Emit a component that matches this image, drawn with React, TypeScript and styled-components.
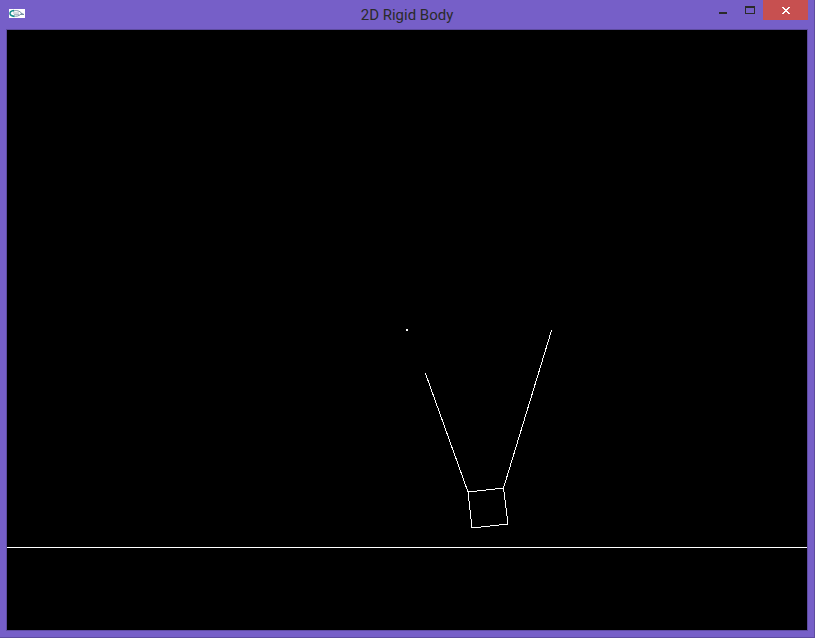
import React from "react";
import styled, { createGlobalStyle } from "styled-components";

const frame = "#765fc8";
const edge = "#5e4ca0";
const ink = "#2a2a2a";

const GlobalStyle = createGlobalStyle`
  *, *::before, *::after { box-sizing: border-box; }
  body { margin: 0; background: ${frame}; }
`;

const Window = styled.main`
  display: flex;
  flex-direction: column;
  min-height: 100vh;
  padding: 0 6px 6px;
  background: ${frame};
  border: solid ${edge};
  border-width: 0 1px 1px 0;
`;

const TitleBar = styled.header`
  display: grid;
  grid-template-columns: 1fr auto 1fr;
  align-items: start;
  height: 29px;
`;

const AppIcon = styled.svg`
  display: block;
  width: 16px;
  height: 9px;
  margin: 9px 3px;
`;

const Title = styled.h1`
  margin: 0;
  padding-top: 5px;
  color: ${ink};
  font: 400 15px/20px Roboto, "Open Sans", sans-serif;
  white-space: nowrap;
`;

const Controls = styled.div`
  display: flex;
  justify-content: flex-end;
`;

const ControlButton = styled.button<{ $close?: boolean }>`
  display: flex;
  align-items: center;
  justify-content: center;
  width: ${(p) => (p.$close ? 45 : 27)}px;
  height: 20px;
  padding: 0;
  border: 0;
  color: ${(p) => (p.$close ? "#ffffff" : ink)};
  background: ${(p) => (p.$close ? "#c75050" : "transparent")};
`;

const Glyph = styled.svg`
  display: block;
  width: 11px;
  height: 10px;
  shape-rendering: crispEdges;
`;

const Viewport = styled.section`
  display: flex;
  flex: 1;
  background: #000000;
  border: 1px solid ${edge};
`;

const Scene = styled.svg`
  display: block;
  width: 100%;
  height: auto;
  fill: none;
  stroke: #ffffff;
  shape-rendering: crispEdges;
`;

export default function App() {
  return (
    <>
      <GlobalStyle />
      <Window>
        <TitleBar>
          <AppIcon viewBox="0 0 16 9" aria-hidden="true">
            <rect width="16" height="9" fill="#ffffff" />
            <path d="M4 2.2C7 .7 11 2 12.500 4.200C11 7 7 7.800 4.500 6.800M12 4.200L15 5.500H11" fill="none" stroke="#7892a4" />
            <path d="M5 1.500C2 2 .9 3 1 4.600S3 7.100 5.500 7.400" fill="none" stroke="#128c8c" strokeWidth="1.500" />
            <path d="M4 4h6M5 5.500h5" fill="none" stroke="#94a8b5" strokeWidth=".8" />
          </AppIcon>
          <Title>2D Rigid Body</Title>
          <Controls>
            <ControlButton type="button" aria-label="Minimize">
              <Glyph viewBox="0 0 11 10" aria-hidden="true">
                <rect x="2" y="7" width="8" height="2" fill="currentColor" />
              </Glyph>
            </ControlButton>
            <ControlButton type="button" aria-label="Maximize">
              <Glyph viewBox="0 0 11 10" aria-hidden="true">
                <path d="M1 1h10v8H1zM2 3v5h8V3z" fill="currentColor" fillRule="evenodd" />
              </Glyph>
            </ControlButton>
            <ControlButton type="button" aria-label="Close" $close>
              <Glyph viewBox="0 0 11 10" aria-hidden="true">
                <path
                  d="M2 2h2v1h-2zM8 2h2v1h-2zM3 3h2v1h-2zM7 3h2v1h-2zM4 4h4v1h-4zM5 5h2v1h-2zM4 6h4v1h-4zM3 7h2v1h-2zM7 7h2v1h-2zM2 8h2v1h-2zM8 8h2v1h-2z"
                  fill="currentColor"
                />
              </Glyph>
            </ControlButton>
          </Controls>
        </TitleBar>
        <Viewport>
          <Scene viewBox="0 0 800 600" role="img" aria-label="Rigid body suspended by two lines above the ground">
            <rect x="399" y="299" width="2" height="2" fill="#ffffff" stroke="none" />
            <path d="M418.500 343.500L461 462" />
            <path d="M544.500 300.500L496.500 458" />
            <path d="M461 462L496.500 458L501 494L465 498Z" />
            <path d="M0 517.500H800" />
          </Scene>
        </Viewport>
      </Window>
    </>
  );
}
